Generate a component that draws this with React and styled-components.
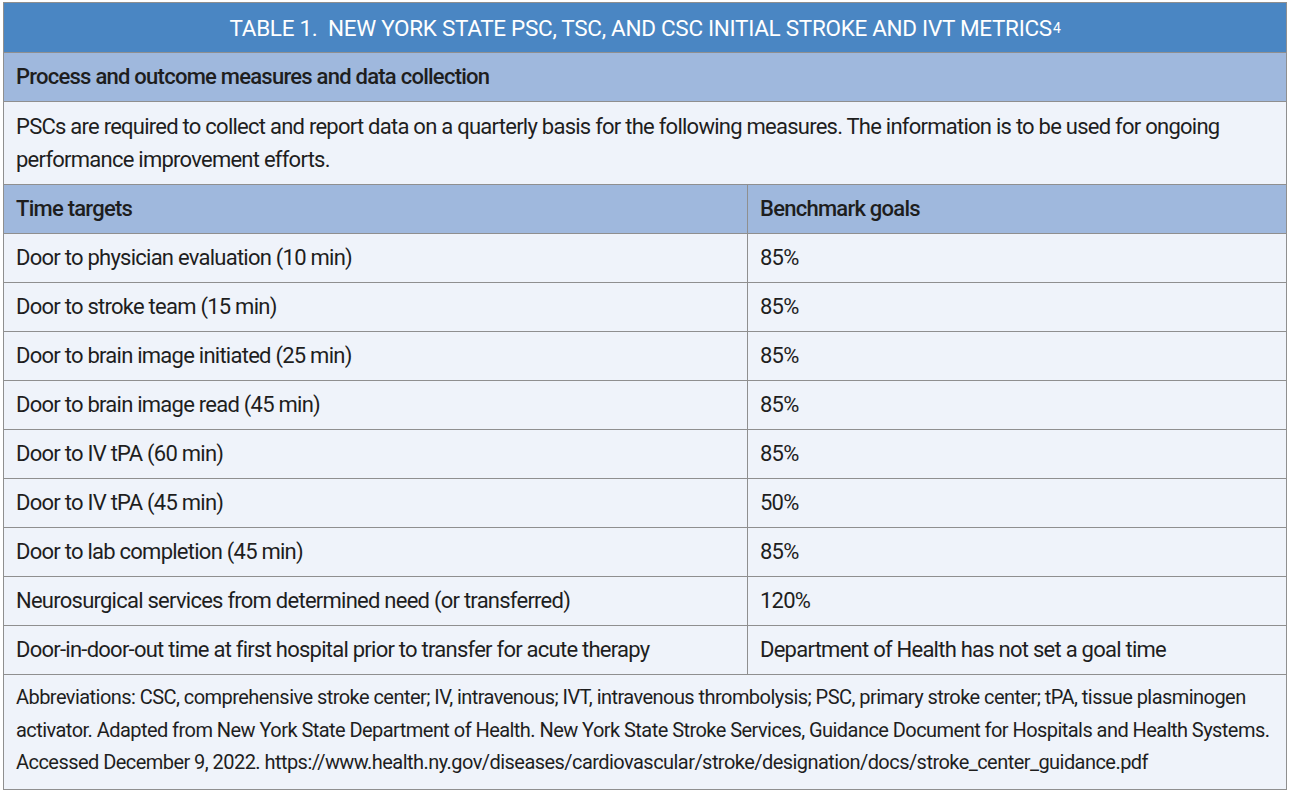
import React from 'react'
import styled, { createGlobalStyle } from 'styled-components'

const Global = createGlobalStyle`
  html, body { margin: 0; padding: 0; background: #ffffff; }
  body { font-family: "Roboto", "Liberation Sans", sans-serif; color: #1e1e1e; }
`

const Page = styled.div`
  padding: 2px 3px 6px 3px;
`

const Table = styled.div`
  border: 1px solid #8f8f8f;
  display: grid;
  grid-template-columns: 743px 1fr;
`

const Title = styled.div`
  grid-column: 1 / -1;
  background: #4a86c3;
  color: #ffffff;
  height: 49px;
  display: flex;
  align-items: center;
  justify-content: center;
  font-size: 22.5px;
  letter-spacing: -0.3px;
  border-bottom: 1px solid #8f8f8f;
  white-space: pre;
  sup { font-size: 14px; vertical-align: 9px; line-height: 0; margin-left: 1px; }
`

const Band = styled.div`
  grid-column: ${p => (p.$span ? '1 / -1' : 'auto')};
  background: ${p => (p.$head ? '#9fb8dd' : '#eff3fa')};
  border-bottom: 1px solid #8f8f8f;
  border-left: ${p => (p.$right ? '1px solid #8f8f8f' : 'none')};
  font-size: 22px;
  font-weight: ${p => (p.$head ? 500 : 400)};
  letter-spacing: -0.75px;
  line-height: 33px;
  padding: ${p => (p.$tall ? '8px 12px 8px 12px' : '7px 12px 8px 12px')};
  min-height: 33px;
`

const Note = styled.div`
  grid-column: 1 / -1;
  background: #eff3fa;
  font-size: 20px;
  letter-spacing: -0.55px;
  line-height: 32.5px;
  padding: 6px 12px 10px 12px;
`

const rows = [
  ['Door to physician evaluation (10 min)', '85%'],
  ['Door to stroke team (15 min)', '85%'],
  ['Door to brain image initiated (25 min)', '85%'],
  ['Door to brain image read (45 min)', '85%'],
  ['Door to IV tPA (60 min)', '85%'],
  ['Door to IV tPA (45 min)', '50%'],
  ['Door to lab completion (45 min)', '85%'],
  ['Neurosurgical services from determined need (or transferred)', '120%'],
  ['Door-in-door-out time at first hospital prior to transfer for acute therapy', 'Department of Health has not set a goal time'],
]

export default function App() {
  return (
    <Page>
      <Global />
      <Table>
        <Title>
          TABLE 1.  NEW YORK STATE PSC, TSC, AND CSC INITIAL STROKE AND IVT METRICS<sup>4</sup>
        </Title>
        <Band $span $head>Process and outcome measures and data collection</Band>
        <Band $span $tall>
          PSCs are required to collect and report data on a quarterly basis for the following measures. The information is to be used for ongoing performance improvement efforts.
        </Band>
        <Band $head>Time targets</Band>
        <Band $head $right>Benchmark goals</Band>
        {rows.map(([a, b]) => (
          <React.Fragment key={a}>
            <Band>{a}</Band>
            <Band $right>{b}</Band>
          </React.Fragment>
        ))}
        <Note>
          Abbreviations: CSC, comprehensive stroke center; IV, intravenous; IVT, intravenous thrombolysis; PSC, primary stroke center; tPA, tissue plasminogen activator. Adapted from New York State Department of Health. New York State Stroke Services, Guidance Document for Hospitals and Health Systems. Accessed December 9, 2022. https://www.health.ny.gov/diseases/cardiovascular/stroke/designation/docs/stroke_center_guidance.pdf
        </Note>
      </Table>
    </Page>
  )
}
